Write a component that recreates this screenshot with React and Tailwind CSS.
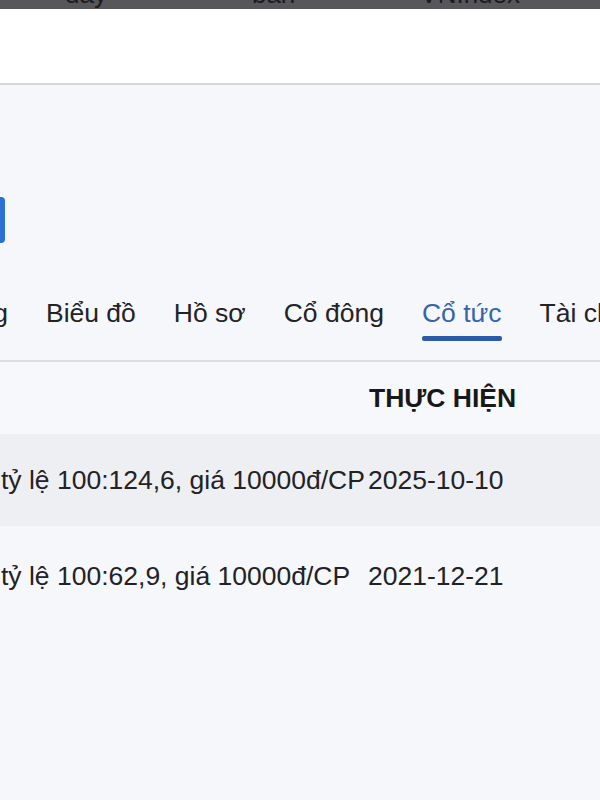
export default function App() {
  const tabs = [
    { label: "Thị trường", active: false },
    { label: "Biểu đồ", active: false },
    { label: "Hồ sơ", active: false },
    { label: "Cổ đông", active: false },
    { label: "Cổ tức", active: true },
    { label: "Tài chính", active: false },
  ];
  const rows = [
    { text: "tỷ lệ 100:124,6, giá 10000đ/CP", date: "2025-10-10", bg: "bg-[#eeeff3]", h: "h-[92px]" },
    { text: "tỷ lệ 100:62,9, giá 10000đ/CP", date: "2021-12-21", bg: "bg-[#f6f7fb]", h: "h-[100px]" },
  ];
  return (
    <div
      className="w-[600px] h-[800px] overflow-hidden bg-[#f6f7fb] text-[#222226]"
      style={{ fontFamily: '"Liberation Sans", Arial, sans-serif' }}
    >
      {/* cut-off top bar */}
      <div className="h-[9px] bg-[#56565b] overflow-hidden">
        <div className="flex mt-[-21px] text-[26px] leading-[30px] text-[#1c1c1f]">
          <span className="ml-[65px]">đáy</span>
          <span className="ml-[145px]">bán</span>
          <span className="ml-[125px]">VNIndex</span>
        </div>
      </div>
      <div className="h-[76px] bg-white border-b-2 border-[#d7d7da]" />

      {/* blue button edge */}
      <div className="mt-[112px] w-[5px] h-[46px] bg-[#2c6fd6] rounded-r-[4px]" />

      {/* tabs */}
      <div className="pt-[55px] pb-[19px] border-b-2 border-[#dcdde2] overflow-hidden">
        <div className="flex gap-[38px] ml-[-117px] whitespace-nowrap">
          {tabs.map((t) => (
            <div key={t.label} className="flex flex-col shrink-0">
              <span
                className={`text-[26.5px] leading-[30px] ${t.active ? "text-[#3565ad]" : "text-[#232326]"}`}
              >
                {t.label}
              </span>
              <div
                className={`mt-[8px] h-[5px] rounded-[2px] ${t.active ? "bg-[#2b5ba8]" : "bg-transparent"}`}
              />
            </div>
          ))}
        </div>
      </div>

      {/* table */}
      <div className="grid grid-cols-[368px_1fr] h-[72px] items-center bg-[#f7f8fc]">
        <div />
        <div className="font-bold text-[26.5px] leading-[30px] text-[#18181b] pl-[1px]">THỰC HIỆN</div>
      </div>
      {rows.map((r) => (
        <div key={r.date} className={`grid grid-cols-[368px_1fr] items-center ${r.h} ${r.bg}`}>
          <div className="text-[26.5px] leading-[30px] whitespace-nowrap pl-[1px]">{r.text}</div>
          <div className="text-[26.5px] leading-[30px] whitespace-nowrap">{r.date}</div>
        </div>
      ))}
    </div>
  );
}
